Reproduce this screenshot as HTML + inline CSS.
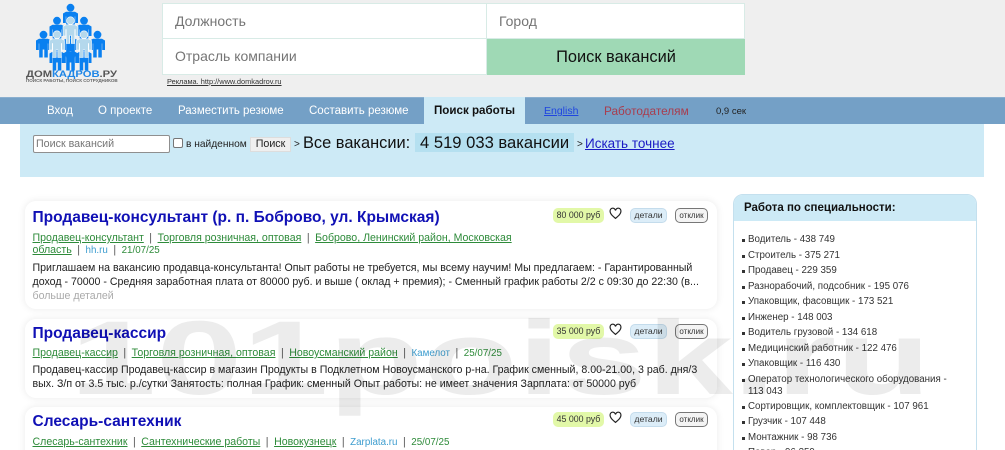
<!DOCTYPE html>
<html lang="ru"><head><meta charset="utf-8"><title>Поиск работы</title>
<style>
*{box-sizing:border-box}
html,body{margin:0;padding:0;width:1005px;height:450px;overflow:hidden;background:#fff;font-family:"Liberation Sans",sans-serif;color:#222}
#page{position:relative;width:1005px;height:450px;overflow:hidden;background:#fff}
a{color:inherit}
#top{position:absolute;left:0;top:0;width:1005px;height:97px;background:#efefef}
.f{position:absolute;background:#fff;border:1px solid #d8ebe6;color:#757575;font-size:14px;line-height:34px;padding-left:12px}
#nav{position:absolute;left:0;top:97px;width:1005px;height:27px;background:#74a0c6;border-top:1px solid #8aafcf}
#nav span,#nav a{position:absolute;top:6px;font-size:11.5px;line-height:15px;color:#fff;text-decoration:none;white-space:nowrap}
#tab{position:absolute;left:424px;top:97px;width:101px;height:27px;background:#cdeaf6;color:#111;font-weight:bold;font-size:11.6px;text-align:center;line-height:27px;white-space:nowrap}
#sb{position:absolute;left:20px;top:124px;width:964px;height:53px;background:#cdeaf6}
.t{position:absolute;white-space:nowrap}
.card{position:absolute;left:25px;width:692px;background:rgba(255,255,255,.85);border-radius:11px;box-shadow:0 0 8px rgba(0,0,0,.09)}
.h{position:absolute;left:7.5px;font-size:15.5px;font-weight:bold;color:#1010b5;white-space:nowrap;line-height:20px}
.m{position:absolute;left:7.5px;font-size:10.6px;line-height:13px;color:#555;white-space:nowrap}
.m a{color:#2e8b3a;text-decoration:underline}
.m .s{color:#3d9dcf;font-size:9.800px}.m .d{color:#2e8b3a;font-size:9.800px}
.m i{font-style:normal;margin:0 5.500px}
.b{position:absolute;left:7.5px;font-size:10.62px;line-height:14px;color:#222;white-space:nowrap}
.sal{position:absolute;left:528px;width:51px;height:15px;background:#e2f8a8;border-radius:5px;font-size:8.800px;line-height:15px;text-align:center;color:#333}
.det{position:absolute;left:605px;width:37px;height:15px;background:#dcedf8;border:1px solid #c4dcec;border-radius:5px;font-size:8.7px;line-height:13px;text-align:center;color:#333}
.otk{position:absolute;left:650px;width:33px;height:15px;background:#f4f4f4;border:1px solid #777;border-radius:5px;font-size:8px;line-height:13px;text-align:center;color:#333}
.hrt{position:absolute;left:584px;width:13px;height:13px}
#side{position:absolute;left:733px;top:194px;width:244px;height:270px;background:rgba(255,255,255,.85);border:1px solid #c4e0ee;border-radius:10px;overflow:hidden}
#side .hd{position:absolute;left:0;top:0;width:100%;height:26px;background:#cdeaf6;font-weight:bold;font-size:11.5px;line-height:27px;padding-left:10px;color:#111}
#side p{position:absolute;left:14px;margin:0;font-size:9.75px;line-height:12px;color:#333;width:220px}
#side p:before{content:"";position:absolute;left:-6px;top:5px;width:3px;height:3px;background:#333}
#wm{position:absolute;left:70px;top:294px;font-size:105px;line-height:130px;font-weight:bold;color:rgba(0,0,0,.075);transform-origin:0 0;transform:scaleX(1.475);white-space:nowrap;pointer-events:none}
</style></head><body>
<div id="page">
<div id="top"></div>
<svg style="position:absolute;left:25px;top:0" width="95" height="75" viewBox="0 0 95 75">
<defs><g id="pp"><circle cx="0" cy="3.700" r="3.900"/><path d="M-4.500 7.800h9l3 1.700v9.500h-2.800v-6.500h-.4v14h-3.500v-8h-1.600v8h-3.500v-14h-.4v6.500h-2.800v-9.500z"/></g></defs>
<g fill="#0a80f0">
<use href="#pp" x="45.500" y="4"/><use href="#pp" x="32" y="17"/><use href="#pp" x="59" y="17"/>
<use href="#pp" x="18.500" y="31"/><use href="#pp" x="45.500" y="31"/><use href="#pp" x="72.500" y="31"/>
<use href="#pp" x="32" y="44"/><use href="#pp" x="45.500" y="44"/><use href="#pp" x="59" y="44"/>
</g>
<g fill="#b4d8ec" stroke="#fff" stroke-width=".6"><use href="#pp" x="45.500" y="17"/><use href="#pp" x="32" y="31"/><use href="#pp" x="59" y="31"/></g>
</svg>
<div class="t" style="left:26px;top:69px;font-size:9.500px;line-height:11px;font-weight:bold;color:#555;transform-origin:0 0;transform:scaleX(1.18)">ДОМ<span style="color:#1f86e6">КАДРОВ</span>.РУ</div>
<div class="t" style="left:26px;top:78px;font-size:4.550px;line-height:6px;font-weight:bold;color:#666">ПОИСК РАБОТЫ, ПОИСК СОТРУДНИКОВ</div>
<div class="f" style="left:162px;top:3px;width:325px;height:36px">Должность</div>
<div class="f" style="left:162px;top:38px;width:325px;height:37px">Отрасль компании</div>
<div class="f" style="left:486px;top:3px;width:259px;height:36px">Город</div>
<div class="t" style="left:487px;top:39px;width:258px;height:36px;background:#9fd9b5;color:#111;font-size:16.400px;line-height:36px;text-align:center">Поиск вакансий</div>
<div class="t" style="left:167px;top:77px;font-size:7.400px;line-height:10px;color:#333;text-decoration:underline">Реклама. http://www.domkadrov.ru</div>
<div id="nav">
<span style="left:47px">Вход</span><span style="left:98px">О проекте</span><span style="left:178px">Разместить резюме</span><span style="left:309px">Составить резюме</span>
<a href="#" style="left:544px;top:6px;font-size:10.500px;color:#1f45e0;text-decoration:underline">English</a>
<span style="left:604px;font-size:11.800px;color:#a83d4e">Работодателям</span>
<span style="left:716px;top:6px;font-size:9.500px;color:#222">0,9 сек</span>
</div>
<div id="tab">Поиск работы</div>
<div id="sb"></div>
<div class="t" style="left:33px;top:135px;width:137px;height:18px;background:#fff;border:1px solid #8f8f8f;border-radius:2px;font-size:10.700px;line-height:16px;padding-left:2px;color:#757575">Поиск вакансий</div>
<div class="t" style="left:173px;top:138px;width:10px;height:10px;background:#fff;border:1px solid #767676;border-radius:2px"></div>
<div class="t" style="left:186px;top:138px;font-size:10.200px;line-height:13px;color:#222">в найденном</div>
<div class="t" style="left:250px;top:137px;width:41px;height:15px;background:#efefef;border:1px solid #ddd;font-size:10.700px;line-height:13px;text-align:center;color:#222">Поиск</div>
<div class="t" style="left:294px;top:138px;font-size:10px;line-height:13px;color:#222">&gt;</div>
<div class="t" style="left:303px;top:134px;font-size:16.400px;line-height:19px;color:#111">Все вакансии:</div>
<div class="t" style="left:415px;top:133px;width:159px;height:19px;background:#b5e0f0;font-size:16.600px;line-height:20px;padding-left:5px;color:#111">4 519 033 вакансии</div>
<div class="t" style="left:577px;top:138px;font-size:10px;line-height:13px;color:#222">&gt;</div>
<a href="#" class="t" style="left:585px;top:135px;font-size:13.500px;line-height:17px;color:#1a1ac4">Искать точнее</a>

<div class="card" style="top:201px;height:108px">
<div class="h" style="top:7px">Продавец-консультант (р. п. Боброво, ул. Крымская)</div>
<div class="sal" style="top:7px">80 000 руб</div>
<svg class="hrt" style="top:6px" viewBox="0 0 24 24" fill="none" stroke="#222" stroke-width="2.200"><path d="M12 21C5 15 2 12 2 8a5 5 0 0 1 10-1.500A5 5 0 0 1 22 8c0 4-3 7-10 13z"/></svg>
<div class="det" style="top:7px">детали</div><div class="otk" style="top:7px">отклик</div>
<div class="m" style="top:31px"><a href="#">Продавец-консультант</a><i>|</i><a href="#">Торговля розничная, оптовая</a><i>|</i><a href="#">Боброво, Ленинский район, Московская</a></div>
<div class="m" style="top:43px"><a href="#">область</a><i>|</i><span class="s">hh.ru</span><i>|</i><span class="d">21/07/25</span></div>
<div class="b" style="top:60px">Приглашаем на вакансию продавца-консультанта! Опыт работы не требуется, мы всему научим! Мы предлагаем: - Гарантированный</div>
<div class="b" style="top:74px">доход - 70000 - Средняя заработная плата от 80000 руб. и выше ( оклад + премия); - Сменный график работы 2/2 с 09:30 до 22:30 (в...</div>
<div class="b" style="top:88px;color:#aaa">больше деталей</div>
</div>

<div class="card" style="top:319px;height:79px">
<div class="h" style="top:5px">Продавец-кассир</div>
<div class="sal" style="top:5px">35 000 руб</div>
<svg class="hrt" style="top:4px" viewBox="0 0 24 24" fill="none" stroke="#222" stroke-width="2.200"><path d="M12 21C5 15 2 12 2 8a5 5 0 0 1 10-1.500A5 5 0 0 1 22 8c0 4-3 7-10 13z"/></svg>
<div class="det" style="top:5px">детали</div><div class="otk" style="top:5px">отклик</div>
<div class="m" style="top:28px"><a href="#">Продавец-кассир</a><i>|</i><a href="#">Торговля розничная, оптовая</a><i>|</i><a href="#">Новоусманский район</a><i>|</i><span class="s">Камелот</span><i>|</i><span class="d">25/07/25</span></div>
<div class="b" style="top:44px">Продавец-кассир Продавец-кассир в магазин Продукты в Подклетном Новоусманского р-на. График сменный, 8.00-21.00, 3 раб. дня/3</div>
<div class="b" style="top:58px">вых. З/п от 3.5 тыс. р./сутки Занятость: полная График: сменный Опыт работы: не имеет значения Зарплата: от 50000 руб</div>
</div>

<div class="card" style="top:407px;height:60px">
<div class="h" style="top:5px">Слесарь-сантехник</div>
<div class="sal" style="top:5px">45 000 руб</div>
<svg class="hrt" style="top:4px" viewBox="0 0 24 24" fill="none" stroke="#222" stroke-width="2.200"><path d="M12 21C5 15 2 12 2 8a5 5 0 0 1 10-1.500A5 5 0 0 1 22 8c0 4-3 7-10 13z"/></svg>
<div class="det" style="top:5px">детали</div><div class="otk" style="top:5px">отклик</div>
<div class="m" style="top:29px"><a href="#">Слесарь-сантехник</a><i>|</i><a href="#">Сантехнические работы</a><i>|</i><a href="#">Новокузнецк</a><i>|</i><span class="s">Zarplata.ru</span><i>|</i><span class="d">25/07/25</span></div>
</div>

<div id="side">
<div class="hd">Работа по специальности:</div>
<p style="top:39px">Водитель - 438 749</p>
<p style="top:55px">Строитель - 375 271</p>
<p style="top:70px">Продавец - 229 359</p>
<p style="top:86px">Разнорабочий, подсобник - 195 076</p>
<p style="top:101px">Упаковщик, фасовщик - 173 521</p>
<p style="top:117px">Инженер - 148 003</p>
<p style="top:132px">Водитель грузовой - 134 618</p>
<p style="top:148px">Медицинский работник - 122 476</p>
<p style="top:163px">Упаковщик - 116 430</p>
<p style="top:179px">Оператор технологического оборудования -<br>113 043</p>
<p style="top:206px">Сортировщик, комплектовщик - 107 961</p>
<p style="top:221px">Грузчик - 107 448</p>
<p style="top:237px">Монтажник - 98 736</p>
<p style="top:252px">Повар - 96 359</p>
</div>
<div id="wm">101poisk.ru</div>
</div>
</body></html>
